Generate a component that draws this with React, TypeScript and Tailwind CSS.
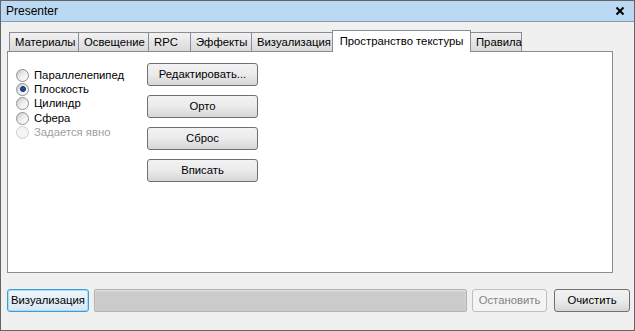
import React from "react";

const TABS = [
  { label: "Материалы", w: 70 },
  { label: "Освещение", w: 71 },
  { label: "RPC", w: 43 },
  { label: "Эффекты", w: 62 },
  { label: "Визуализация", w: 82 },
  { label: "Пространство текстуры", w: 139, active: true },
  { label: "Правила", w: 52 },
];

const RADIOS = [
  { label: "Параллелепипед" },
  { label: "Плоскость", checked: true },
  { label: "Цилиндр" },
  { label: "Сфера" },
  { label: "Задается явно", disabled: true },
];

const Radio = ({ checked, disabled }: { checked?: boolean; disabled?: boolean }) => (
  <span
    className={`relative inline-block shrink-0 w-[13px] h-[13px] rounded-full border ${
      disabled
        ? "border-[#d0d0d0] bg-[#f4f4f4]"
        : "border-[#8e8f8f] bg-gradient-to-br from-[#c8c8c8] via-[#eeeeee] to-[#ffffff]"
    }`}
  >
    {checked && (
      <span className="absolute left-[2.5px] top-[2.5px] w-[6px] h-[6px] rounded-full bg-[#1f4f8f] border border-[#0d2f6a]" />
    )}
  </span>
);

const Btn = ({ children, className = "" }: { children: React.ReactNode; className?: string }) => (
  <button
    className={`h-[23px] rounded-[3px] border border-[#707070] bg-gradient-to-b from-[#f2f2f2] via-[#ebebeb] to-[#d6d6d6] text-black ${className}`}
  >
    {children}
  </button>
);

export default function App() {
  return (
    <div
      className="w-[635px] h-[331px] flex flex-col border border-[#646464] bg-[#f0f0f0] text-[11.3px] text-black"
      style={{ fontFamily: '"Segoe UI", "Liberation Sans", Arial, sans-serif' }}
    >
      <div className="h-[21px] flex items-center justify-between pl-[5px] pr-[5px] bg-[#bcd9f3] border-b border-[#8a9bb0]">
        <span className="text-[12px] text-black">Presenter</span>
        <svg width="10" height="10" viewBox="0 0 10 10" className="mr-[4px]">
          <path d="M1.5 1.5 L8.5 8.5 M8.5 1.5 L1.5 8.5" stroke="#000" strokeWidth="2" />
        </svg>
      </div>

      <div className="flex flex-col pl-[6px] pr-[21px] pt-[7px]">
        <div className="flex items-end h-[22px] pl-[2px] relative z-10">
          {TABS.map((t) =>
            t.active ? (
              <div
                key={t.label}
                className="shrink-0 h-[22px] -mb-px border border-b-0 border-[#898c95] bg-white flex items-start pt-[2px] justify-center -ml-px whitespace-nowrap"
                style={{ width: t.w }}
              >
                {t.label}
              </div>
            ) : (
              <div
                key={t.label}
                className="shrink-0 h-[19px] border border-b-0 border-[#898c95] -ml-px first:ml-0 bg-gradient-to-b from-[#f2f2f2] to-[#d9d9d9] flex items-center px-[5px] whitespace-nowrap"
                style={{ width: t.w }}
              >
                {t.label}
              </div>
            )
          )}
        </div>
        <div className="h-[222px] border border-[#898c95] bg-white flex pl-[8px] pt-[11px]">
          <div className="flex flex-col w-[131px] pt-[5px]">
            {RADIOS.map((r) => (
              <label key={r.label} className="flex items-center gap-[5px] h-[14.3px]">
                <Radio checked={r.checked} disabled={r.disabled} />
                <span className={r.disabled ? "text-[#a0a0a0]" : ""}>{r.label}</span>
              </label>
            ))}
          </div>
          <div className="flex flex-col gap-[9px]">
            <Btn className="w-[111px]">Редактировать...</Btn>
            <Btn className="w-[111px]">Орто</Btn>
            <Btn className="w-[111px]">Сброс</Btn>
            <Btn className="w-[111px]">Впиcать</Btn>
          </div>
        </div>
      </div>

      <div className="flex items-center gap-[5px] pl-[6px] pt-[16px]">
        <button className="w-[82px] h-[23px] rounded-[3px] border border-[#3c9ed8] bg-gradient-to-b from-[#eef6fb] to-[#d7e8f3] shadow-[inset_0_0_0_1px_#a8dbf5]">
          Визуализация
        </button>
        <div className="w-[373px] h-[23px] rounded-[2px] border border-[#b2b2b2] bg-[#cbcbcb] shadow-[inset_0_1px_2px_#e8e8e8]" />
        <button className="w-[75px] h-[23px] rounded-[3px] border border-[#bfbfbf] bg-[#f4f4f4] text-[#838383]">
          Остановить
        </button>
        <Btn className="w-[76px] ml-[2px]">Очистить</Btn>
      </div>
    </div>
  );
}
